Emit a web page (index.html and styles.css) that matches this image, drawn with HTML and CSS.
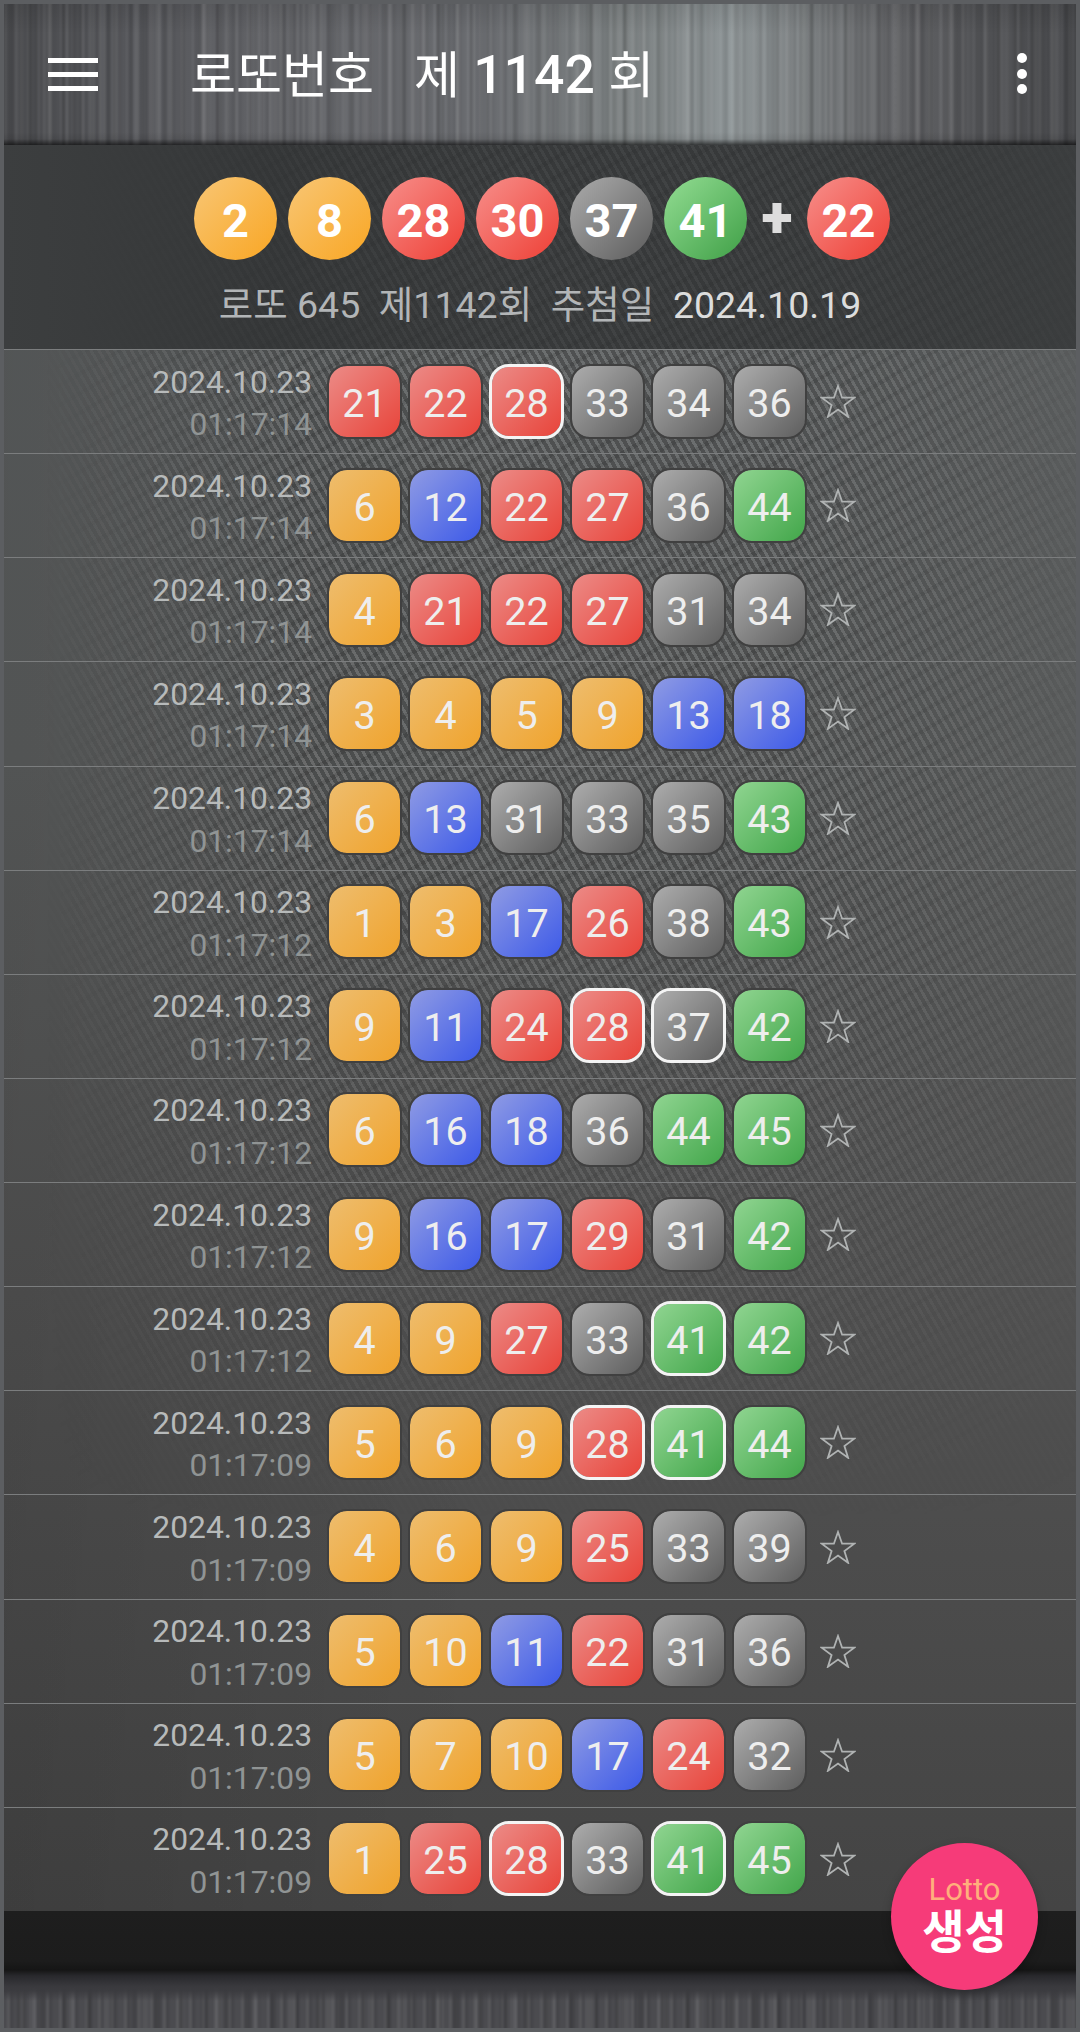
FILE: index.html
```html
<!DOCTYPE html>
<html lang="ko">
<head>
<meta charset="utf-8">
<title>로또번호</title>
<link rel="stylesheet" href="styles.css">
</head>
<body>
<div class="frame">
  <header class="appbar">
    <button class="menu" aria-label="메뉴"><i></i><i></i><i></i></button>
    <h1 class="title"><span class="ko">로또번호</span>   <span class="ko">제</span> 1142 <span class="ko">회</span></h1>
    <button class="more" aria-label="더보기"><i></i><i></i><i></i></button>
  </header>
  <main class="board">
    <section class="summary">
      <div class="balls">
        <span class="ball orange">2</span>
        <span class="ball orange">8</span>
        <span class="ball red">28</span>
        <span class="ball red">30</span>
        <span class="ball gray">37</span>
        <span class="ball green">41</span>
        <span class="plus">+</span>
        <span class="ball red">22</span>
      </div>
      <p class="draw">로또 645  제1142회  추첨일  <b>2024.10.19</b></p>
    </section>
    <ul class="list">
      <li class="row"><div class="stamp"><span class="date">2024.10.23</span><span class="time">01:17:14</span></div><div class="tiles"><span class="tile red">21</span><span class="tile red">22</span><span class="tile red hit">28</span><span class="tile gray">33</span><span class="tile gray">34</span><span class="tile gray">36</span></div><svg class="star" viewBox="0 0 36 34"><path d="M18 2l4.1 11.7h12.2l-9.9 7.3 3.7 11.8L18 25.6 7.900 32.800l3.700-11.800-9.900-7.300h12.200z"/></svg></li>
      <li class="row"><div class="stamp"><span class="date">2024.10.23</span><span class="time">01:17:14</span></div><div class="tiles"><span class="tile orange">6</span><span class="tile blue">12</span><span class="tile red">22</span><span class="tile red">27</span><span class="tile gray">36</span><span class="tile green">44</span></div><svg class="star" viewBox="0 0 36 34"><path d="M18 2l4.1 11.7h12.2l-9.9 7.3 3.7 11.8L18 25.6 7.900 32.800l3.700-11.800-9.900-7.300h12.200z"/></svg></li>
      <li class="row"><div class="stamp"><span class="date">2024.10.23</span><span class="time">01:17:14</span></div><div class="tiles"><span class="tile orange">4</span><span class="tile red">21</span><span class="tile red">22</span><span class="tile red">27</span><span class="tile gray">31</span><span class="tile gray">34</span></div><svg class="star" viewBox="0 0 36 34"><path d="M18 2l4.1 11.7h12.2l-9.9 7.3 3.7 11.8L18 25.6 7.900 32.800l3.700-11.800-9.900-7.300h12.200z"/></svg></li>
      <li class="row"><div class="stamp"><span class="date">2024.10.23</span><span class="time">01:17:14</span></div><div class="tiles"><span class="tile orange">3</span><span class="tile orange">4</span><span class="tile orange">5</span><span class="tile orange">9</span><span class="tile blue">13</span><span class="tile blue">18</span></div><svg class="star" viewBox="0 0 36 34"><path d="M18 2l4.1 11.7h12.2l-9.9 7.3 3.7 11.8L18 25.6 7.900 32.800l3.700-11.800-9.900-7.300h12.200z"/></svg></li>
      <li class="row"><div class="stamp"><span class="date">2024.10.23</span><span class="time">01:17:14</span></div><div class="tiles"><span class="tile orange">6</span><span class="tile blue">13</span><span class="tile gray">31</span><span class="tile gray">33</span><span class="tile gray">35</span><span class="tile green">43</span></div><svg class="star" viewBox="0 0 36 34"><path d="M18 2l4.1 11.7h12.2l-9.9 7.3 3.7 11.8L18 25.6 7.900 32.800l3.700-11.800-9.900-7.300h12.200z"/></svg></li>
      <li class="row"><div class="stamp"><span class="date">2024.10.23</span><span class="time">01:17:12</span></div><div class="tiles"><span class="tile orange">1</span><span class="tile orange">3</span><span class="tile blue">17</span><span class="tile red">26</span><span class="tile gray">38</span><span class="tile green">43</span></div><svg class="star" viewBox="0 0 36 34"><path d="M18 2l4.1 11.7h12.2l-9.9 7.3 3.7 11.8L18 25.6 7.900 32.800l3.700-11.800-9.900-7.300h12.200z"/></svg></li>
      <li class="row"><div class="stamp"><span class="date">2024.10.23</span><span class="time">01:17:12</span></div><div class="tiles"><span class="tile orange">9</span><span class="tile blue">11</span><span class="tile red">24</span><span class="tile red hit">28</span><span class="tile gray hit">37</span><span class="tile green">42</span></div><svg class="star" viewBox="0 0 36 34"><path d="M18 2l4.1 11.7h12.2l-9.9 7.3 3.7 11.8L18 25.6 7.900 32.800l3.700-11.800-9.900-7.300h12.200z"/></svg></li>
      <li class="row"><div class="stamp"><span class="date">2024.10.23</span><span class="time">01:17:12</span></div><div class="tiles"><span class="tile orange">6</span><span class="tile blue">16</span><span class="tile blue">18</span><span class="tile gray">36</span><span class="tile green">44</span><span class="tile green">45</span></div><svg class="star" viewBox="0 0 36 34"><path d="M18 2l4.1 11.7h12.2l-9.9 7.3 3.7 11.8L18 25.6 7.900 32.800l3.700-11.800-9.900-7.300h12.200z"/></svg></li>
      <li class="row"><div class="stamp"><span class="date">2024.10.23</span><span class="time">01:17:12</span></div><div class="tiles"><span class="tile orange">9</span><span class="tile blue">16</span><span class="tile blue">17</span><span class="tile red">29</span><span class="tile gray">31</span><span class="tile green">42</span></div><svg class="star" viewBox="0 0 36 34"><path d="M18 2l4.1 11.7h12.2l-9.9 7.3 3.7 11.8L18 25.6 7.900 32.800l3.700-11.800-9.900-7.300h12.200z"/></svg></li>
      <li class="row"><div class="stamp"><span class="date">2024.10.23</span><span class="time">01:17:12</span></div><div class="tiles"><span class="tile orange">4</span><span class="tile orange">9</span><span class="tile red">27</span><span class="tile gray">33</span><span class="tile green hit">41</span><span class="tile green">42</span></div><svg class="star" viewBox="0 0 36 34"><path d="M18 2l4.1 11.7h12.2l-9.9 7.3 3.7 11.8L18 25.6 7.900 32.800l3.700-11.800-9.900-7.300h12.200z"/></svg></li>
      <li class="row"><div class="stamp"><span class="date">2024.10.23</span><span class="time">01:17:09</span></div><div class="tiles"><span class="tile orange">5</span><span class="tile orange">6</span><span class="tile orange">9</span><span class="tile red hit">28</span><span class="tile green hit">41</span><span class="tile green">44</span></div><svg class="star" viewBox="0 0 36 34"><path d="M18 2l4.1 11.7h12.2l-9.9 7.3 3.7 11.8L18 25.6 7.900 32.800l3.700-11.800-9.900-7.300h12.200z"/></svg></li>
      <li class="row"><div class="stamp"><span class="date">2024.10.23</span><span class="time">01:17:09</span></div><div class="tiles"><span class="tile orange">4</span><span class="tile orange">6</span><span class="tile orange">9</span><span class="tile red">25</span><span class="tile gray">33</span><span class="tile gray">39</span></div><svg class="star" viewBox="0 0 36 34"><path d="M18 2l4.1 11.7h12.2l-9.9 7.3 3.7 11.8L18 25.6 7.900 32.800l3.700-11.800-9.900-7.300h12.200z"/></svg></li>
      <li class="row"><div class="stamp"><span class="date">2024.10.23</span><span class="time">01:17:09</span></div><div class="tiles"><span class="tile orange">5</span><span class="tile orange">10</span><span class="tile blue">11</span><span class="tile red">22</span><span class="tile gray">31</span><span class="tile gray">36</span></div><svg class="star" viewBox="0 0 36 34"><path d="M18 2l4.1 11.7h12.2l-9.9 7.3 3.7 11.8L18 25.6 7.900 32.800l3.700-11.800-9.900-7.300h12.200z"/></svg></li>
      <li class="row"><div class="stamp"><span class="date">2024.10.23</span><span class="time">01:17:09</span></div><div class="tiles"><span class="tile orange">5</span><span class="tile orange">7</span><span class="tile orange">10</span><span class="tile blue">17</span><span class="tile red">24</span><span class="tile gray">32</span></div><svg class="star" viewBox="0 0 36 34"><path d="M18 2l4.1 11.7h12.2l-9.9 7.3 3.7 11.8L18 25.6 7.900 32.800l3.700-11.800-9.900-7.300h12.200z"/></svg></li>
      <li class="row"><div class="stamp"><span class="date">2024.10.23</span><span class="time">01:17:09</span></div><div class="tiles"><span class="tile orange">1</span><span class="tile red">25</span><span class="tile red hit">28</span><span class="tile gray">33</span><span class="tile green hit">41</span><span class="tile green">45</span></div><svg class="star" viewBox="0 0 36 34"><path d="M18 2l4.1 11.7h12.2l-9.9 7.3 3.7 11.8L18 25.6 7.900 32.800l3.700-11.800-9.900-7.300h12.200z"/></svg></li>
    </ul>
  </main>
  <footer class="foot"></footer>
  <button class="fab"><span class="fab-top">Lotto</span><span class="fab-main">생성</span></button>
</div>
</body>
</html>
```
FILE: styles.css
```css
* { box-sizing: border-box; }
html, body { margin: 0; padding: 0; }
body {
  width: 1080px;
  height: 2032px;
  overflow: hidden;
  background: #5c5e61;
  font-family: Roboto, "Noto Sans CJK KR", sans-serif;
}
.frame {
  position: relative;
  width: 1080px;
  height: 2032px;
  padding: 4px;
  display: flex;
  flex-direction: column;
}
button { border: 0; padding: 0; background: none; font: inherit; color: inherit; }

/* brushed metal bar */
.appbar {
  position: relative;
  overflow: hidden;
  height: 141px;
  flex: none;
  display: flex;
  align-items: center;
  color: #fff;
  background: linear-gradient(90deg, #4a4b4e 0, #56575b 12%, #626367 25%, #6a6c70 45%, #7d8283 58%, #8f9698 68%, #7a7e80 75%, #626366 83%, #505154 92%, #48494c 100%);
}
.appbar::before {
  content: "";
  position: absolute;
  inset: -4px;
  filter: blur(1px);
  background:
    repeating-linear-gradient(90deg, rgba(255,255,255,0) 0 5px, rgba(255,255,255,.06) 5px 7px, rgba(0,0,0,.05) 7px 11px),
    repeating-linear-gradient(90deg, rgba(0,0,0,0) 0 11px, rgba(0,0,0,.08) 11px 14px, rgba(255,255,255,.04) 14px 17px),
    repeating-linear-gradient(90deg, rgba(255,255,255,0) 0 19px, rgba(255,255,255,.05) 19px 23px),
    repeating-linear-gradient(90deg, rgba(0,0,0,0) 0 31px, rgba(0,0,0,.07) 31px 37px),
    repeating-linear-gradient(90deg, rgba(255,255,255,0) 0 43px, rgba(255,255,255,.04) 43px 53px);
}
.appbar::after {
  content: "";
  position: absolute;
  inset: 0;
  background: linear-gradient(to bottom, rgba(0,0,0,.1) 0, rgba(0,0,0,0) 30px, rgba(0,0,0,0) 128px, rgba(0,0,0,.08) 135px, rgba(0,0,0,.6) 141px);
}
.appbar > * { position: relative; z-index: 1; }
.menu {
  width: 50px;
  height: 33px;
  margin-left: 44px;
  margin-top: -1px;
  display: flex;
  flex-direction: column;
  justify-content: space-between;
}
.menu i { display: block; height: 5px; background: #fff; }
.title {
  margin: 2px 0 0 92px;
  flex: 1;
  font-size: 53.5px;
  font-weight: 500;
  line-height: 60px;
  white-space: pre;
}
.ko { font-size: 50px; font-weight: 400; }
.more {
  width: 10px;
  height: 41px;
  margin-right: 49px;
  margin-top: -2px;
  display: flex;
  flex-direction: column;
  justify-content: space-between;
}
.more i { display: block; width: 10px; height: 10px; border-radius: 50%; background: #fff; }

/* main board with carbon texture */
.board {
  position: relative;
  flex: none;
  height: 1766px;
  display: flex;
  flex-direction: column;
  background:
    linear-gradient(90deg, rgba(0,0,0,.1) 0, rgba(0,0,0,0) 45%),
    linear-gradient(to bottom, #5c5f60 0, #5b5d5d 35%, #525252 65%, #444 100%);
}
.board::before {
  content: "";
  position: absolute;
  inset: 0;
  background:
    repeating-linear-gradient(150deg, rgba(0,0,0,0) 0 13px, rgba(0,0,0,.1) 13px 17px),
    repeating-linear-gradient(60deg, rgba(255,255,255,.1) 0 3px, rgba(0,0,0,.14) 3px 7px);
  -webkit-mask-image:
    linear-gradient(90deg, transparent 40px, #000 300px, #000 780px, rgba(0,0,0,.5) 970px, rgba(0,0,0,.15) 1076px),
    linear-gradient(to bottom, #000 0, #000 40%, rgba(0,0,0,.5) 60%, transparent 78%);
  mask-image:
    linear-gradient(90deg, transparent 40px, #000 300px, #000 780px, rgba(0,0,0,.5) 970px, rgba(0,0,0,.15) 1076px),
    linear-gradient(to bottom, #000 0, #000 40%, rgba(0,0,0,.5) 60%, transparent 78%);
  -webkit-mask-composite: source-in;
  mask-composite: intersect;
}
.summary {
  position: relative;
  height: 204px;
  flex: none;
  display: flex;
  flex-direction: column;
  align-items: center;
  padding-top: 32px;
  background: linear-gradient(90deg, #3c3e3f 0, rgba(48,50,51,.85) 25%, rgba(44,46,47,.68) 45%, rgba(44,46,47,.68) 100%);
}
.balls { display: flex; gap: 11px; margin-left: 4px; }
.ball {
  width: 83px;
  height: 83px;
  border-radius: 50%;
  display: flex;
  align-items: center;
  justify-content: center;
  padding-top: 4px;
  color: #fff;
  font-size: 47px;
  font-weight: 700;
}
.ball.orange { background: linear-gradient(135deg, #f8c675, #f9a623); }
.ball.red { background: linear-gradient(135deg, #f78f8b, #ee3f35); }
.ball.gray { background: linear-gradient(135deg, #acacac, #5c5c5c); }
.ball.green { background: linear-gradient(135deg, #93dd93, #3f9f46); }
.plus {
  width: 38px;
  display: flex;
  align-items: center;
  justify-content: center;
  color: #ddd;
  font-size: 58px;
  font-weight: 900;
  line-height: 83px;
  margin-top: -3px;
}
.draw {
  margin: 20px 0 0;
  font-size: 37.5px;
  line-height: 50px;
  color: #b2b5b7;
  white-space: pre;
}
.draw b { font-weight: 400; color: #dcdddd; }

.list {
  position: relative;
  flex: 1;
  margin: 0;
  padding: 0;
  list-style: none;
  display: grid;
  grid-template-rows: repeat(15, 1fr);
}
.row {
  display: flex;
  align-items: center;
  border-top: 1px solid #7b7d7e;
  padding-bottom: 1px;
}
.stamp {
  width: 308px;
  flex: none;
  display: flex;
  flex-direction: column;
  align-items: flex-end;
  padding-top: 4px;
  font-size: 31.8px;
  line-height: 42.5px;
}
.date { color: #b7baba; }
.time { color: #909494; }
.tiles { display: flex; gap: 6px; margin-left: 15px; }
.tile {
  width: 75px;
  height: 75px;
  border: 2.5px solid #404040;
  border-radius: 20px;
  background-clip: padding-box;
  display: flex;
  align-items: center;
  justify-content: center;
  padding-top: 4px;
  color: #eee;
  font-size: 39.5px;
}
.tile.orange { background-image: linear-gradient(135deg, #eebd6e, #f0a32c); }
.tile.red { background-image: linear-gradient(135deg, #ec8b87, #e8443a); }
.tile.blue { background-image: linear-gradient(135deg, #8f9be4, #3d5ae8); }
.tile.gray { background-image: linear-gradient(135deg, #adadad, #5e5e5e); }
.tile.green { background-image: linear-gradient(135deg, #90d591, #42a64a); }
.tile.hit { border: 3px solid #f4f4f4; }
.star {
  width: 36px;
  height: 34px;
  margin-left: 13px;
  fill: none;
  stroke: #b0b3b3;
  stroke-width: 1.8;
  stroke-linejoin: miter;
}

/* footer */
.foot {
  position: relative;
  overflow: hidden;
  flex: 1;
  background: #4b4b4f;
}
.foot::before {
  content: "";
  position: absolute;
  inset: -4px;
  filter: blur(1.2px);
  background:
    repeating-linear-gradient(90deg, rgba(255,255,255,0) 0 7px, rgba(255,255,255,.07) 7px 10px, rgba(0,0,0,.09) 10px 13px),
    repeating-linear-gradient(90deg, rgba(0,0,0,0) 0 17px, rgba(0,0,0,.11) 17px 23px),
    repeating-linear-gradient(90deg, rgba(255,255,255,0) 0 29px, rgba(255,255,255,.05) 29px 37px);
}
.foot::after {
  content: "";
  position: absolute;
  inset: 0;
  background: linear-gradient(to bottom, #1e1e1e 0, #1c1c1c 50px, #151515 59px, #29292d 65px, #3a3a3e 76px, rgba(58,58,62,.9) 80px, rgba(58,58,62,0) 90px);
}
.fab {
  position: absolute;
  left: 891px;
  top: 1843px;
  width: 147px;
  height: 147px;
  border-radius: 50%;
  background: #f63b79;
  display: flex;
  flex-direction: column;
  align-items: center;
  padding-top: 29px;
  box-shadow: 0 4px 10px rgba(0,0,0,.25);
}
.fab-top { font-size: 31px; line-height: 36px; color: #ffaf7c; }
.fab-main { font-size: 46px; font-weight: 700; line-height: 50px; color: #fff; margin-top: -1px; }
```
